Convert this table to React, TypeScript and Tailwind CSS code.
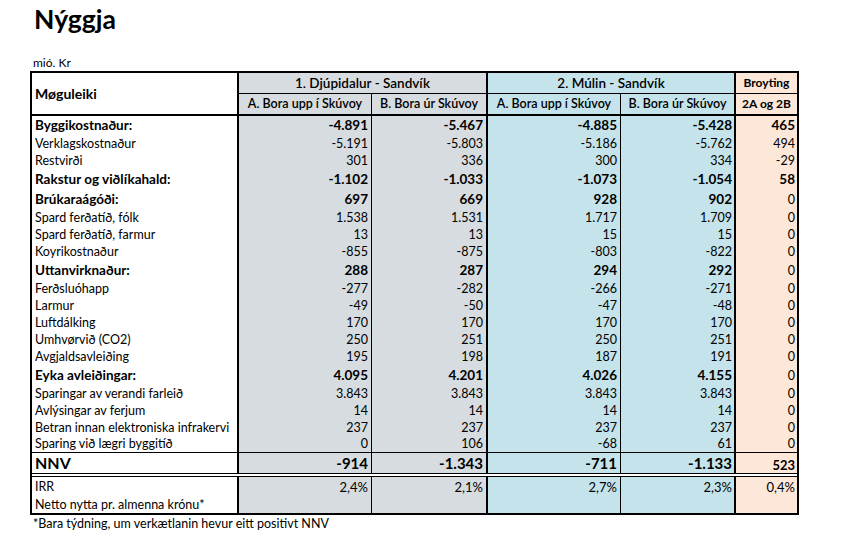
import React from 'react';

type Row = { label: string; v: string[]; bold?: boolean; brBold?: boolean; h?: string };

const rows: Row[] = [
  { label: 'Byggikostnaður:', v: ['-4.891', '-5.467', '-4.885', '-5.428', '465'], bold: true, brBold: true },
  { label: 'Verklagskostnaður', v: ['-5.191', '-5.803', '-5.186', '-5.762', '494'] },
  { label: 'Restvirði', v: ['301', '336', '300', '334', '-29'] },
  { label: 'Rakstur og viðlíkahald:', v: ['-1.102', '-1.033', '-1.073', '-1.054', '58'], bold: true, brBold: true },
  { label: 'Brúkaraágóði:', v: ['697', '669', '928', '902', '0'], bold: true },
  { label: 'Spard ferðatíð, fólk', v: ['1.538', '1.531', '1.717', '1.709', '0'] },
  { label: 'Spard ferðatíð, farmur', v: ['13', '13', '15', '15', '0'] },
  { label: 'Koyrikostnaður', v: ['-855', '-875', '-803', '-822', '0'] },
  { label: 'Uttanvirknaður:', v: ['288', '287', '294', '292', '0'], bold: true },
  { label: 'Ferðsluóhapp', v: ['-277', '-282', '-266', '-271', '0'] },
  { label: 'Larmur', v: ['-49', '-50', '-47', '-48', '0'] },
  { label: 'Luftdálking', v: ['170', '170', '170', '170', '0'] },
  { label: 'Umhvørvið (CO2)', v: ['250', '251', '250', '251', '0'] },
  { label: 'Avgjaldsavleiðing', v: ['195', '198', '187', '191', '0'] },
  { label: 'Eyka avleiðingar:', v: ['4.095', '4.201', '4.026', '4.155', '0'], bold: true },
  { label: 'Sparingar av verandi farleið', v: ['3.843', '3.843', '3.843', '3.843', '0'] },
  { label: 'Avlýsingar av ferjum', v: ['14', '14', '14', '14', '0'] },
  { label: 'Betran innan elektroniska infrakervi', v: ['237', '237', '237', '237', '0'] },
  { label: 'Sparing við lægri byggitíð', v: ['0', '106', '-68', '61', '0'], h: 'h-[15px]' },
];

// column boxes, widths include their right border
const cols = [
  'w-[133px] border-r border-black bg-[#d6dcdf] pr-[3px]',
  'w-[116px] border-r-2 border-black bg-[#d6dcdf] pr-[3px]',
  'w-[133px] border-r border-black bg-[#c4e3eb] pr-[3px]',
  'w-[115px] border-r-2 border-black bg-[#c4e3eb] pr-[2px]',
  'w-[61px] bg-[#fce7d9] pr-[2px]',
];

function DataRow({ row }: { row: Row }) {
  const h = row.h ?? (row.bold ? 'h-[20px]' : 'h-[17px]');
  return (
    <div className={`flex ${h}`}>
      <div
        className={`w-[207px] border-r-2 border-black pl-[3px] flex items-center leading-none whitespace-nowrap ${
          row.bold ? 'font-bold text-[13.5px]' : 'text-[12.5px]'
        }`}
      >
        {row.label}
      </div>
      {row.v.map((val, i) => {
        const b = i < 4 ? row.bold : row.brBold;
        return (
          <div
            key={i}
            className={`${cols[i]} flex items-center justify-end leading-none ${
              b ? 'font-bold text-[13.5px]' : 'text-[12.5px]'
            }`}
          >
            {val}
          </div>
        );
      })}
    </div>
  );
}

export default function App() {
  return (
    <div className="w-[842px] h-[555px] bg-white text-black font-['Lato',sans-serif] px-[30px] overflow-hidden">
      <div className="mt-[6px] ml-[4px] h-[26px] leading-none text-[26.5px] font-bold">Nýggja</div>
      <div className="mt-[24px] ml-[3px] h-[14px] leading-[14px] text-[12px]">mió. Kr</div>

      <div className="mt-[1px] w-[769px] border-2 border-black">
        {/* header */}
        <div className="flex border-b-2 border-black">
          <div className="w-[207px] h-[41px] border-r-2 border-black pl-[3px] flex items-center text-[14px] font-bold">
            Møguleiki
          </div>
          <div className="w-[249px] border-r-2 border-black bg-[#d6dcdf]">
            <div className="h-[21px] border-b border-black flex items-center justify-center text-[13.5px] font-semibold">
              1. Djúpidalur - Sandvík
            </div>
            <div className="flex h-[20px] text-[12.5px] font-semibold">
              <div className="w-[133px] border-r border-black flex items-center justify-center">A. Bora upp í Skúvoy</div>
              <div className="w-[114px] flex items-center justify-center">B. Bora úr Skúvoy</div>
            </div>
          </div>
          <div className="w-[248px] border-r-2 border-black bg-[#c4e3eb]">
            <div className="h-[21px] border-b border-black flex items-center justify-center text-[13.5px] font-semibold">
              2. Múlin - Sandvík
            </div>
            <div className="flex h-[20px] text-[12.5px] font-semibold">
              <div className="w-[133px] border-r border-black flex items-center justify-center">A. Bora upp í Skúvoy</div>
              <div className="w-[113px] flex items-center justify-center">B. Bora úr Skúvoy</div>
            </div>
          </div>
          <div className="w-[61px] bg-[#fce7d9] text-[12px] font-bold">
            <div className="h-[21px] border-b border-black flex items-center justify-center">Broyting</div>
            <div className="h-[20px] flex items-center justify-center">2A og 2B</div>
          </div>
        </div>

        {/* body */}
        {rows.map((r) => (
          <DataRow key={r.label} row={r} />
        ))}

        {/* NNV */}
        <div className="flex h-[22px] border-y border-black">
          <div className="w-[207px] border-r-2 border-black pl-[3px] flex items-center text-[16px] font-bold leading-none">
            NNV
          </div>
          {['-914', '-1.343', '-711', '-1.133'].map((v, i) => (
            <div key={i} className={`${cols[i]} flex items-center justify-end text-[15px] font-bold leading-none`}>
              {v}
            </div>
          ))}
          <div className={`${cols[4]} flex items-end justify-end pb-[1px] text-[13px] font-bold leading-none`}>523</div>
        </div>
        <div className="h-[2px] bg-white" />

        {/* IRR */}
        <div className="flex h-[37px] border-t border-black">
          <div className="w-[207px] border-r-2 border-black pl-[3px] pt-[3px] flex flex-col gap-[5px] text-[12.5px] leading-[13px]">
            <div>IRR</div>
            <div>Netto nytta pr. almenna krónu*</div>
          </div>
          {['2,4%', '2,1%', '2,7%', '2,3%', '0,4%'].map((v, i) => (
            <div key={i} className={`${cols[i]} pt-[4px] text-right text-[13px] leading-[13px]`}>
              {v}
            </div>
          ))}
        </div>
      </div>

      <div className="mt-[2px] ml-[3px] text-[12.5px] leading-[14px]">
        *Bara týdning, um verkætlanin hevur eitt positivt NNV
      </div>
    </div>
  );
}
